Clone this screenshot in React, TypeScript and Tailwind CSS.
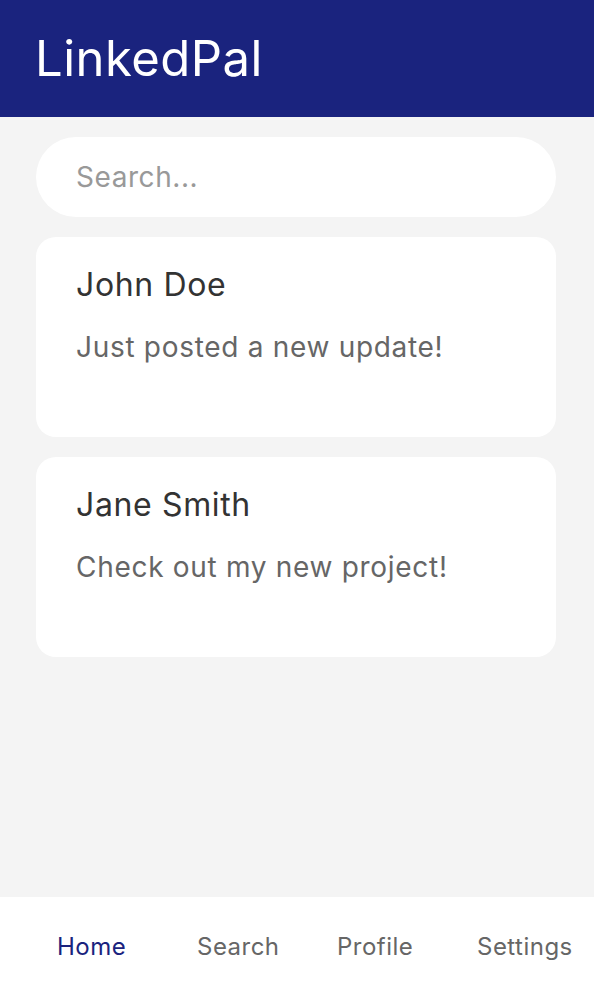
/**
 * LinkedPal feed screen
 */
const posts = [
  { id: 1, name: 'John Doe', text: 'Just posted a new update!' },
  { id: 2, name: 'Jane Smith', text: 'Check out my new project!' },
];

const tabs = ['Home', 'Search', 'Profile', 'Settings'];

export default function App() {
  return (
    <div
      className="flex h-screen flex-col bg-[#f4f4f4]"
      style={{ fontFamily: 'Inter, "Noto Sans", sans-serif' }}
    >
      {/* Header */}
      <header className="flex h-[117px] shrink-0 items-center bg-[#1a237e] pl-[35px]">
        <h1 className="text-[49px] leading-[58px] tracking-[0.01em] text-white">LinkedPal</h1>
      </header>

      {/* Feed */}
      <main className="flex flex-1 flex-col gap-5 pl-9 pr-[38px] pt-5">
        <input
          type="text"
          placeholder="Search..."
          className="h-20 w-full rounded-full bg-white pl-10 text-[28px] tracking-[0.02em] text-[#333] outline-none placeholder:text-[#999]"
        />

        {posts.map((post) => (
          <div key={post.id} className="h-[200px] rounded-[20px] bg-white px-10 pt-[29px]">
            <div className="mb-[26px] text-[32px] leading-[38px] tracking-[0.02em] text-[#333]">
              {post.name}
            </div>
            <div className="text-[28px] leading-[34px] tracking-[0.025em] text-[#666]">{post.text}</div>
          </div>
        ))}
      </main>

      {/* Bottom Tabs */}
      <nav className="flex h-[99px] shrink-0 items-center bg-white pl-[57px]">
        {tabs.map((tab, i) => (
          <span
            key={tab}
            className={`w-[140px] shrink-0 text-[24px] tracking-[0.02em] last:w-auto ${
              i === 0 ? 'text-[#1a237e]' : 'text-[#666]'
            }`}
          >
            {tab}
          </span>
        ))}
      </nav>
    </div>
  );
}
